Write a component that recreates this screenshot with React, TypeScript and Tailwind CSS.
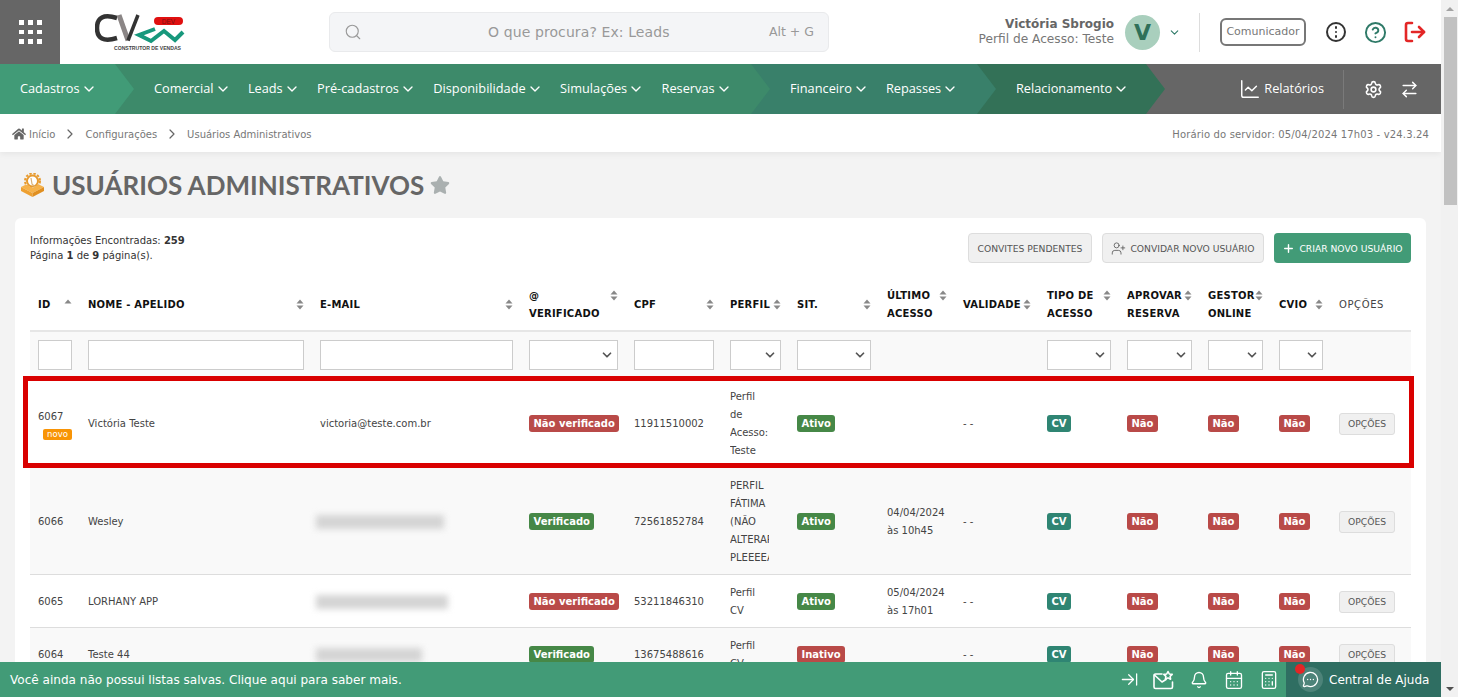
import React from "react";
import {
  ArrowRightLeft, ArrowRightToLine, Bell, Calculator, CalendarDays, ChartLine, ChevronDown, ChevronRight,
  CircleHelp, LogOut, MessageCircleMore, Plus, Search, Settings, UserPlus,
} from "lucide-react";
import { FaHome, FaStar } from "react-icons/fa";

const V = "font-['DejaVu_Sans',sans-serif]";

function NavItem({ label }: { label: string }) {
  return (
    <span className="flex items-center gap-[1px] text-white text-[12.75px] font-medium whitespace-nowrap font-['Open_Sans',sans-serif]">
      {label}
      <ChevronDown size={16} strokeWidth={2} />
    </span>
  );
}

function Sort({ only }: { only?: boolean }) {
  return (
    <svg width="8" height="11" viewBox="0 0 8 11" className="shrink-0 mt-[3px]">
      <path d="M4 0.5 L7.5 4.5 H0.5 Z" fill="#888" />
      {!only && <path d="M4 10.5 L7.5 6.5 H0.5 Z" fill="#888" />}
    </svg>
  );
}

function Th({ lines, sort = true, only, plain }: { lines: string[]; sort?: boolean; only?: boolean; plain?: boolean }) {
  return (
    <th className="p-0 px-2 pt-[1px] align-middle text-left border-b-2 border-[#e6e6e6] h-[53px]">
      <div className="flex justify-between items-start">
        <div className={plain ? "font-normal text-[#444] text-[10px] leading-[18px] tracking-[0.6px]" : "font-bold text-[#111] text-[10px] leading-[18px] tracking-[0.22px] whitespace-nowrap"}>
          {lines.map((l) => (
            <div key={l}>{l}</div>
          ))}
        </div>
        {sort && <Sort only={only} />}
      </div>
    </th>
  );
}

function Sel() {
  return (
    <td className="px-2 pt-[8px] align-top">
      <div className="relative h-[30px] border border-[#ccc] bg-white">
        <select className="w-full h-full appearance-none bg-transparent outline-none" />
        <ChevronDown size={14} strokeWidth={3} className="absolute right-[3px] top-[7px] text-[#555] pointer-events-none" />
      </div>
    </td>
  );
}

function Inp() {
  return (
    <td className="px-2 pt-[8px] align-top">
      <input className="block w-full h-[30px] border border-[#ccc] bg-white outline-none" />
    </td>
  );
}

function Badge({ t, c }: { t: string; c: string }) {
  return (
    <span className={`inline-block h-[17px] px-[4.5px] rounded-[3px] text-white font-bold text-[10px] leading-[17px] whitespace-nowrap ${c}`}>{t}</span>
  );
}
const RED = "bg-[#b94a48]";
const GREEN = "bg-[#468847]";
const TEAL = "bg-[#2f8573]";

type Row = {
  id: string; novo?: boolean; name: string; email?: string; blur?: string; ver: boolean; cpf: string;
  perfil: string[]; ativo: boolean; acesso?: string[]; bg: string;
};

const rows: Row[] = [
  { id: "6067", novo: true, name: "Victória Teste", email: "victoria@teste.com.br", ver: false, cpf: "11911510002", perfil: ["Perfil", "de", "Acesso:", "Teste"], ativo: true, bg: "bg-white" },
  { id: "6066", name: "Wesley", blur: "w-[128px]", ver: true, cpf: "72561852784", perfil: ["PERFIL", "FÁTIMA", "(NÃO", "ALTERAR", "PLEEEEASE"], ativo: true, acesso: ["04/04/2024", "às 10h45"], bg: "bg-[#f9f9f9]" },
  { id: "6065", name: "LORHANY APP", blur: "w-[132px]", ver: false, cpf: "53211846310", perfil: ["Perfil", "CV"], ativo: true, acesso: ["05/04/2024", "às 17h01"], bg: "bg-white" },
  { id: "6064", name: "Teste 44", blur: "w-[106px]", ver: true, cpf: "13675488616", perfil: ["Perfil", "CV"], ativo: false, bg: "bg-[#f9f9f9]" },
];

function Logo() {
  return (
    <svg width="92" height="42" viewBox="0 0 92 42" className="ml-[35px] mt-[3px]">
      <path d="M22 5 Q2 -1 2 15 Q2 31 22 25" fill="none" stroke="#333" strokeWidth="4.5" />
      <path d="M24 2 L33 27.5" stroke="#8b8686" strokeWidth="5" />
      <path d="M33 27.5 L43 2" stroke="#333" strokeWidth="3.5" />
      <polyline points="60,16 44,22 56,28 69,18 80,27 88,19" fill="none" stroke="#17987c" strokeWidth="4" />
      <rect x="59" y="4" width="29" height="8" rx="4" fill="#e01010" />
      <text x="73.5" y="10.5" textAnchor="middle" fontSize="6.5" fill="#7a1010" fontFamily="Liberation Sans">DEV</text>
      <text x="19" y="37" fontSize="5.1" fontWeight="700" fill="#444" fontFamily="Liberation Sans">CONSTRUTOR DE VENDAS</text>
    </svg>
  );
}

function TitleIcon() {
  return (
    <svg width="25" height="24" viewBox="0 0 25 24">
      <circle cx="12.5" cy="8" r="5.5" fill="#fff" stroke="#e79a2e" strokeWidth="2" />
      <circle cx="12.5" cy="8" r="7.5" fill="none" stroke="#e79a2e" strokeWidth="2" strokeDasharray="2.4 1.6" />
      <path d="M11 5 L12 11 L15 14" fill="none" stroke="#d9b27a" strokeWidth="1.2" />
      <path d="M1 14 L6 11.5 L12.5 15 L19 11.5 L24 14 L12.5 20 Z" fill="#f6b24a" />
      <path d="M1 14 L12.5 20 V24 L1 18 Z" fill="#eea030" />
      <path d="M24 14 L12.5 20 V24 L24 18 Z" fill="#e08f20" />
    </svg>
  );
}

function MailStar() {
  return (
    <svg width="21" height="20" viewBox="0 0 21 20" fill="none" stroke="#fff" strokeWidth="1.6" strokeLinecap="round" strokeLinejoin="round">
      <path d="M9 4 H2.5 A1.5 1.5 0 0 0 1 5.5 V17 A1.5 1.5 0 0 0 2.5 18.5 H18 A1.5 1.5 0 0 0 19.5 17 V12" />
      <path d="M1.5 5 L9 12 L13 9.5" />
      <path d="M15 1.5 L16.3 4 L19.2 4.4 L17.1 6.4 L17.6 9.2 L15 7.9 L12.4 9.2 L12.9 6.4 L10.8 4.4 L13.7 4 Z" />
    </svg>
  );
}

const TD = "px-2 pt-[9px] pb-[7px] align-middle";

export default function App() {
  return (
    <div className={`relative flex h-screen w-full overflow-hidden bg-[#f3f3f3] ${V}`}>
      <div className="w-[1441px] shrink-0 flex flex-col overflow-hidden">
        {/* top header */}
        <header className="h-[64px] shrink-0 bg-white flex items-center">
          <div className="w-[60px] h-full bg-[#666] grid grid-cols-3 gap-x-[5px] gap-y-[5px] content-center justify-center px-[19px]">
            {Array.from({ length: 9 }).map((_, i) => (
              <span key={i} className="w-[4.5px] h-[4.5px] bg-white" />
            ))}
          </div>
          <Logo />
          <div className="ml-[142px] w-[500px] h-[40px] bg-[#f4f5f7] border border-[#e9eaec] rounded-md flex items-center pl-[14px] pr-[14px]">
            <Search size={18} strokeWidth={1.5} className="text-[#999]" />
            <span className="ml-[126px] text-[14px] text-[#999] tracking-[0.1px]">O que procura? Ex: Leads</span>
            <span className="ml-auto text-[12.5px] text-[#999]">Alt + G</span>
          </div>
          <div className="ml-auto flex items-center">
            <div className="text-right">
              <div className="text-[12px] font-bold text-[#666] leading-[15px]">Victória Sbrogio</div>
              <div className="text-[12.2px] text-[#777] leading-[15px]">Perfil de Acesso: Teste</div>
            </div>
            <div className="ml-[11px] w-[35px] h-[35px] rounded-full bg-[#a9cfbd] flex items-center justify-center text-[#2f7059] font-bold text-[22px]">V</div>
            <ChevronDown size={13} className="ml-[8px] text-[#2f7a68]" />
            <div className="ml-[18px] w-px h-[39px] bg-[#ddd]" />
            <div className="ml-[20px] w-[86px] h-[28px] pt-[1px] border-2 border-[#777] rounded-md flex items-center justify-center text-[11px] text-[#777]">Comunicador</div>
            <div className="ml-[20px] w-[20px] h-[20px] rounded-full border-2 border-[#333] flex flex-col items-center justify-center gap-[2px]">
              <span className="w-[2.5px] h-[2.5px] rounded-full bg-[#333]" />
              <span className="w-[2.5px] h-[2.5px] rounded-full bg-[#333]" />
              <span className="w-[2.5px] h-[2.5px] rounded-full bg-[#333]" />
            </div>
            <CircleHelp size={23} strokeWidth={2} className="ml-[18px] text-[#2f7a68]" />
            <LogOut size={24} strokeWidth={2.6} className="ml-[16px] mr-[14px] text-[#e32626]" />
          </div>
        </header>

        {/* nav */}
        <nav className="h-[50px] shrink-0 bg-[#666] flex items-center">
          <div className="relative z-40 w-[134px] h-full bg-[#419b77] [clip-path:polygon(0_0,115px_0,134px_50%,115px_100%,0_100%)] flex items-center pl-[20px]">
            <NavItem label="Cadastros" />
          </div>
          <div className="relative z-30 -ml-[20px] w-[656px] h-full bg-[#3d8a6a] [clip-path:polygon(0_0,637px_0,656px_50%,637px_100%,0_100%)] flex items-center pl-[40px] gap-[17.4px]">
            <NavItem label="Comercial" />
            <NavItem label="Leads" />
            <NavItem label="Pré-cadastros" />
            <NavItem label="Disponibilidade" />
            <NavItem label="Simulações" />
            <NavItem label="Reservas" />
          </div>
          <div className="relative z-20 -ml-[20px] w-[246px] h-full bg-[#39806a] [clip-path:polygon(0_0,227px_0,246px_50%,227px_100%,0_100%)] flex items-center pl-[40px] gap-[17px]">
            <NavItem label="Financeiro" />
            <NavItem label="Repasses" />
          </div>
          <div className="relative z-10 -ml-[20px] w-[189px] h-full bg-[#337157] [clip-path:polygon(0_0,170px_0,189px_50%,170px_100%,0_100%)] flex items-center pl-[40px]">
            <NavItem label="Relacionamento" />
          </div>
          <div className="ml-auto flex items-center text-white">
            <ChartLine size={22} strokeWidth={1.6} />
            <span className="ml-[3px] text-[12.75px] font-medium font-['Open_Sans',sans-serif]">Relatórios</span>
            <div className="ml-[19px] w-px h-[39px] bg-[#7a7a7a]" />
            <Settings size={19} strokeWidth={2} className="ml-[20px]" />
            <ArrowRightLeft size={19} strokeWidth={1.8} className="ml-[17px] mr-[22px]" />
          </div>
        </nav>

        {/* breadcrumb */}
        <div className="h-[38px] shrink-0 pt-[2px] bg-white shadow-[0_2px_6px_rgba(0,0,0,0.06)] flex items-center px-3 text-[10px] text-[#777]">
          <FaHome size={14} className="text-[#666]" />
          <span className="ml-[3px]">Início</span>
          <ChevronRight size={16} strokeWidth={1.8} className="mx-[7px] text-[#666]" />
          <span>Configurações</span>
          <ChevronRight size={16} strokeWidth={1.8} className="mx-[7px] text-[#666]" />
          <span>Usuários Administrativos</span>
          <span className="ml-auto tracking-[0.15px]">Horário do servidor: 05/04/2024 17h03 - v24.3.24</span>
        </div>

        {/* title */}
        <div className="h-[66px] shrink-0 flex items-center pl-[20px]">
          <TitleIcon />
          <h1 className="ml-[7px] text-[26px] font-bold text-[#666] font-['Lato',sans-serif]">USUÁRIOS ADMINISTRATIVOS</h1>
          <FaStar size={20} className="ml-[6px] text-[#aab0b0]" />
        </div>

        {/* card */}
        <div className="relative ml-[15px] w-[1411px] bg-white rounded-t-md px-[15px] pt-[15px]">
          <div className="flex items-center justify-between h-[30px] mb-[15px]">
            <div className="text-[10px] leading-[15px] text-[#333]">
              <div>Informações Encontradas: <b>259</b></div>
              <div>Página <b>1</b> de <b>9</b> página(s).</div>
            </div>
            <div className="flex gap-[10px] text-[9.2px]">
              <button className="h-[30px] w-[124px] pt-[1px] bg-[#f0f0f0] border border-[#ddd] rounded-[4px] text-[#555]">CONVITES PENDENTES</button>
              <button className="h-[30px] w-[162px] pt-[1px] bg-[#f0f0f0] border border-[#ddd] rounded-[4px] text-[#555] flex items-center justify-center gap-[4px]">
                <UserPlus size={15} strokeWidth={1.3} />CONVIDAR NOVO USUÁRIO
              </button>
              <button className="h-[30px] w-[137px] pt-[1px] bg-[#429b77] rounded-[4px] text-white flex items-center justify-center gap-[4px]">
                <Plus size={13} strokeWidth={2.6} />CRIAR NOVO USUÁRIO
              </button>
            </div>
          </div>

          <table className="table-fixed border-collapse w-[1381px] text-[10px] text-[#444]">
            <colgroup>
              <col className="w-[50px]" /><col className="w-[232px]" /><col className="w-[209px]" /><col className="w-[105px]" />
              <col className="w-[96px]" /><col className="w-[67px]" /><col className="w-[90px]" /><col className="w-[76px]" />
              <col className="w-[84px]" /><col className="w-[80px]" /><col className="w-[81px]" /><col className="w-[71px]" />
              <col className="w-[60px]" /><col className="w-[80px]" />
            </colgroup>
            <thead>
              <tr>
                <Th lines={["ID"]} only />
                <Th lines={["NOME - APELIDO"]} />
                <Th lines={["E-MAIL"]} />
                <Th lines={["@", "VERIFICADO"]} />
                <Th lines={["CPF"]} />
                <Th lines={["PERFIL"]} />
                <Th lines={["SIT."]} />
                <Th lines={["ÚLTIMO", "ACESSO"]} />
                <Th lines={["VALIDADE"]} />
                <Th lines={["TIPO DE", "ACESSO"]} />
                <Th lines={["APROVAR", "RESERVA"]} />
                <Th lines={["GESTOR", "ONLINE"]} />
                <Th lines={["CVIO"]} />
                <Th lines={["OPÇÕES"]} sort={false} plain />
              </tr>
              <tr className="bg-[#f9f9f9] h-[48px]">
                <Inp /><Inp /><Inp /><Sel /><Inp /><Sel /><Sel /><td />
                <td /><Sel /><Sel /><Sel /><Sel /><td />
              </tr>
            </thead>
            <tbody>
              {rows.map((r) => (
                <tr key={r.id} className={`${r.bg} border-t border-[#ddd] first:border-t-0 leading-[18px]`}>
                  <td className={TD}>
                    <div>{r.id}</div>
                    {r.novo && <span className="block w-[29px] ml-[5px] mt-[3.5px] h-[11px] bg-[#f89406] rounded-[2px] text-[8.5px] leading-[11px] text-center text-white">novo</span>}
                  </td>
                  <td className={TD}>{r.name}</td>
                  <td className={TD}>
                    {r.email ? r.email : <div className={`${r.blur} h-[14px] -ml-[4px] bg-[#d4d4d4] blur-[3px]`} />}
                  </td>
                  <td className={TD}>{r.ver ? <Badge t="Verificado" c={GREEN} /> : <Badge t="Não verificado" c={RED} />}</td>
                  <td className={TD}>{r.cpf}</td>
                  <td className={TD}>
                    <div className="w-[39px] overflow-hidden whitespace-nowrap">
                      {r.perfil.map((p) => (<div key={p}>{p}</div>))}
                    </div>
                  </td>
                  <td className={TD}>{r.ativo ? <Badge t="Ativo" c={GREEN} /> : <Badge t="Inativo" c={RED} />}</td>
                  <td className={`${TD} whitespace-nowrap`}>{r.acesso?.map((a) => (<div key={a}>{a}</div>))}</td>
                  <td className={TD}>- -</td>
                  <td className={TD}><Badge t="CV" c={TEAL} /></td>
                  <td className={TD}><Badge t="Não" c={RED} /></td>
                  <td className={TD}><Badge t="Não" c={RED} /></td>
                  <td className={TD}><Badge t="Não" c={RED} /></td>
                  <td className={TD}>
                    <button className="w-[56px] h-[22px] bg-[#f0f0f0] border border-[#ddd] rounded-[3px] text-[9.2px] text-[#555]">OPÇÕES</button>
                  </td>
                </tr>
              ))}
            </tbody>
          </table>
          {/* red highlight annotation */}
          <div className="absolute left-[8px] top-[158px] w-[1391px] h-[92px] border-[5px] border-[#d90000] pointer-events-none" />
        </div>
      </div>

      {/* scrollbar */}
      <div className="w-[17px] shrink-0 bg-[#f1f1f1] flex flex-col items-center">
        <div className="h-[17px] w-full flex items-center justify-center">
          <span className="w-0 h-0 border-x-[4px] border-x-transparent border-b-[4px] border-b-[#a3a3a3]" />
        </div>
        <div className="w-[13px] h-[188px] bg-[#c1c1c1] ml-[2px]" />
        <div className="mt-auto h-[17px] w-full flex items-center justify-center">
          <span className="w-0 h-0 border-x-[4px] border-x-transparent border-t-[4px] border-t-[#505050]" />
        </div>
      </div>

      {/* fixed footer */}
      <footer className="absolute left-0 bottom-0 w-[1441px] h-[35px] bg-[#429b77] flex items-center text-white">
        <span className="ml-[10px] pt-[1px] text-[12.06px]">Você ainda não possui listas salvas. Clique aqui para saber mais.</span>
        <div className="ml-auto flex items-center">
          <ArrowRightToLine size={19} strokeWidth={1.6} />
          <span className="ml-[14px]"><MailStar /></span>
          <Bell size={18} strokeWidth={1.8} className="ml-[16px]" />
          <CalendarDays size={20} strokeWidth={1.6} className="ml-[16px]" />
          <Calculator size={20} strokeWidth={1.6} className="ml-[15px]" />
          <div className="relative ml-[7px] w-[155px] h-[35px] bg-[#2f6e62] flex items-center pl-[12px]">
            <span className="w-[25px] h-[25px] rounded-full bg-[#4d8379] flex items-center justify-center">
              <MessageCircleMore size={17} strokeWidth={1.8} />
            </span>
            <span className="ml-[6px] text-[12px] whitespace-nowrap">Central de Ajuda</span>
            <span className="absolute left-[9px] top-[2px] w-[10px] h-[10px] rounded-full bg-[#e32626]" />
          </div>
        </div>
      </footer>
    </div>
  );
}
